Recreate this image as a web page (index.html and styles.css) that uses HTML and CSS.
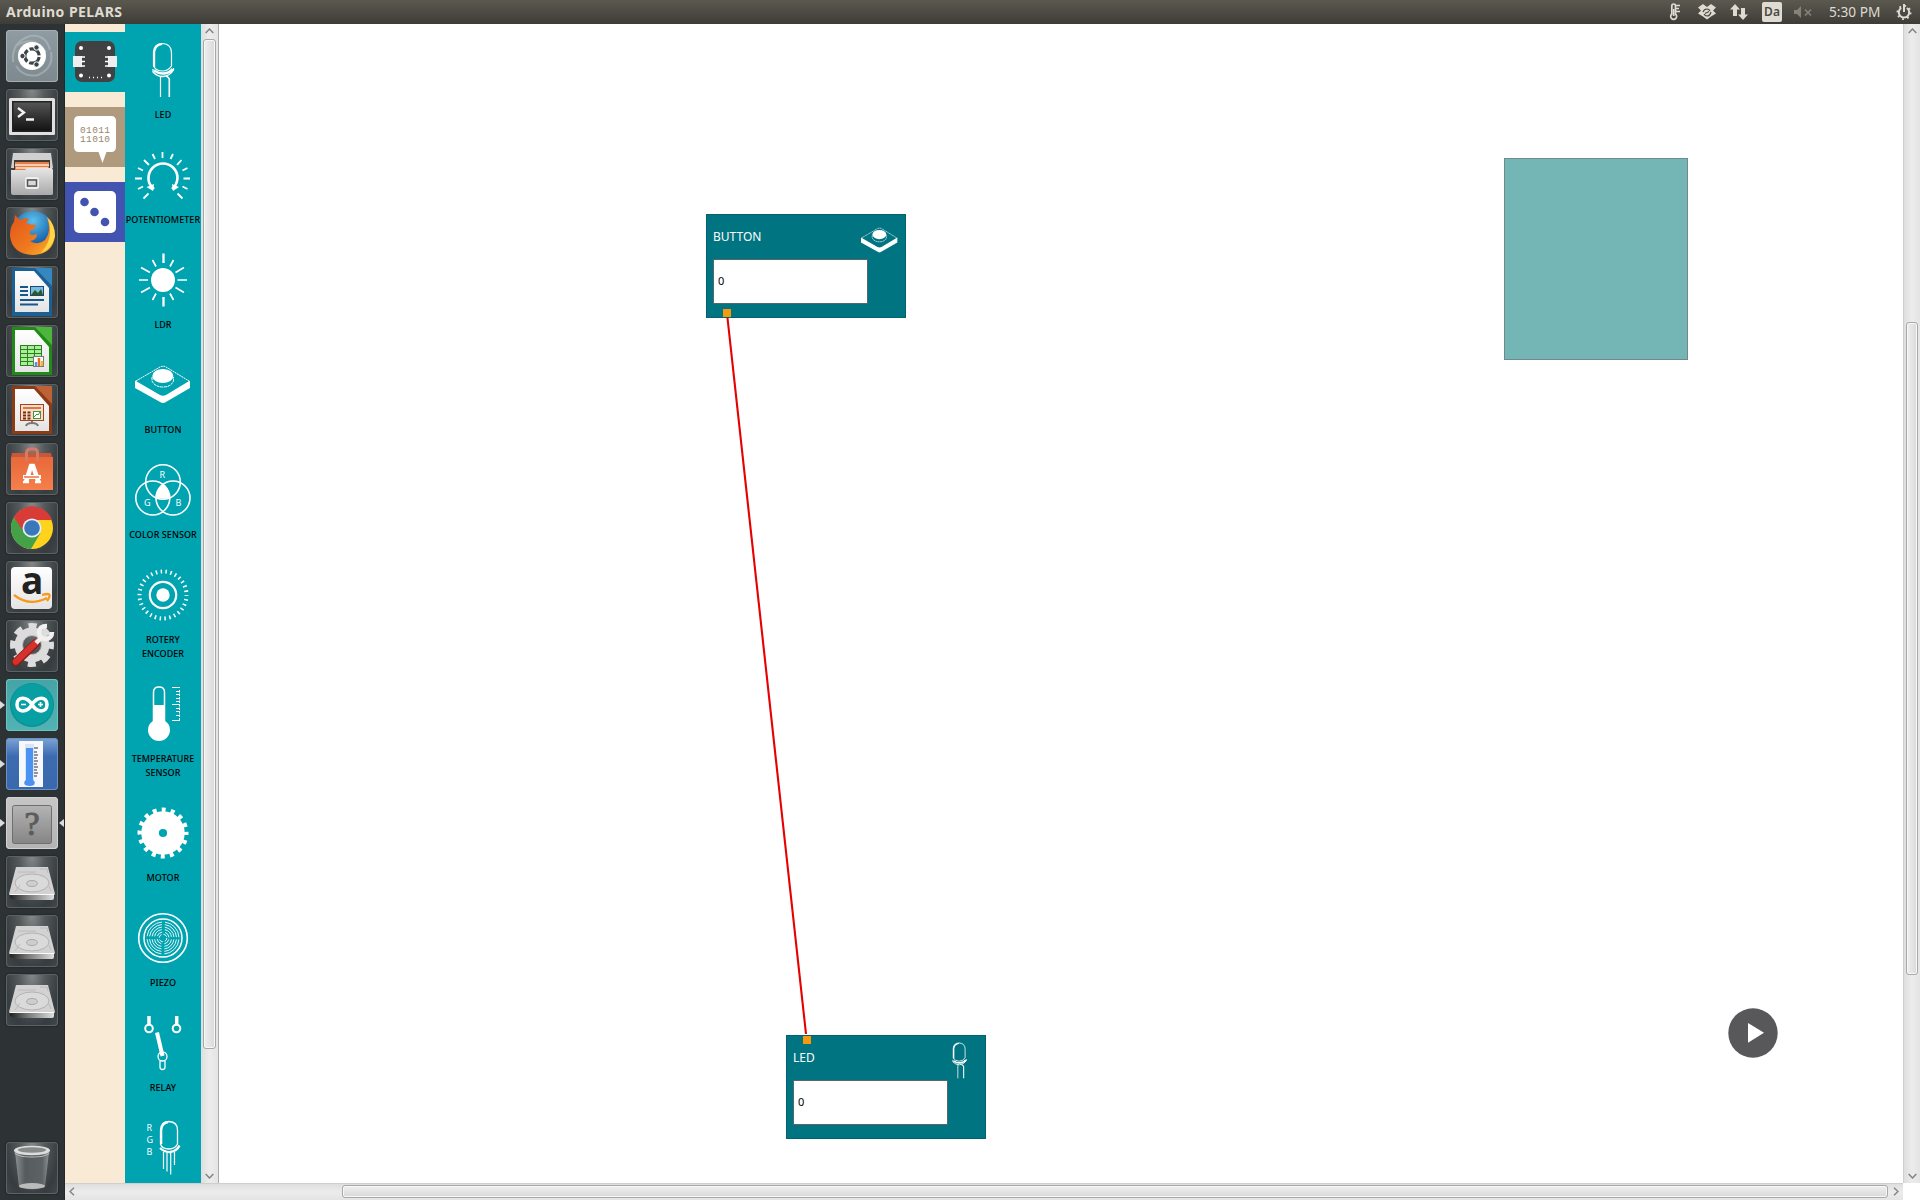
FILE: index.html
```html
<!DOCTYPE html>
<html lang="en">
<head>
<meta charset="utf-8">
<title>Arduino PELARS</title>
<link rel="stylesheet" href="styles.css">
</head>
<body>
<svg class="defs" width="0" height="0" aria-hidden="true">
  <defs>
    <linearGradient id="g-steel" x1="0" y1="0" x2="0" y2="1"><stop offset="0" stop-color="#e6e6e6"/><stop offset="1" stop-color="#a9a9a9"/></linearGradient>
    <linearGradient id="g-dark" x1="0" y1="0" x2="0" y2="1"><stop offset="0" stop-color="#555"/><stop offset=".5" stop-color="#333"/><stop offset="1" stop-color="#141414"/></linearGradient>
    <linearGradient id="g-orange" x1="0" y1="0" x2="0" y2="1"><stop offset="0" stop-color="#e8683a"/><stop offset="1" stop-color="#f4804c"/></linearGradient>
    <linearGradient id="g-fox" x1="0" y1="0" x2="1" y2="1"><stop offset="0" stop-color="#e0551a"/><stop offset=".6" stop-color="#f07a1e"/><stop offset="1" stop-color="#fbc02d"/></linearGradient>
    <radialGradient id="g-globe" cx=".5" cy=".25" r=".8"><stop offset="0" stop-color="#5fc0ea"/><stop offset=".6" stop-color="#1f6fb5"/><stop offset="1" stop-color="#123a78"/></radialGradient>
    <linearGradient id="g-paper" x1="0" y1="0" x2="0" y2="1"><stop offset="0" stop-color="#fff"/><stop offset="1" stop-color="#e4e4e4"/></linearGradient>
    <linearGradient id="g-edge" x1="0" y1="0" x2="1" y2="0"><stop offset="0" stop-color="#222"/><stop offset=".4" stop-color="#777"/><stop offset="1" stop-color="#ddd"/></linearGradient>
    <linearGradient id="g-glass" x1="0" y1="0" x2="1" y2="0"><stop offset="0" stop-color="#8b9092"/><stop offset=".3" stop-color="#565b5d"/><stop offset=".8" stop-color="#5d6264"/><stop offset="1" stop-color="#8d9294"/></linearGradient>
    <linearGradient id="g-unknown" x1="0" y1="0" x2="0" y2="1"><stop offset="0" stop-color="#b4b4b4"/><stop offset="1" stop-color="#858585"/></linearGradient>
  </defs>
  <symbol id="led" viewBox="0 0 56 56">
    <path fill="none" stroke="#fff" stroke-width="1.200" d="M18.500 24V10Q19 1.500 27.500 1.500Q36.500 2 36.500 11V24Q33 29 27.500 29Q21 29 18.500 24Z"/>
    <path fill="none" stroke="#fff" stroke-width="2" d="M19.200 25V10Q20 3 27 2"/>
    <path fill="none" stroke="#fff" stroke-width="1.300" d="M18 27V30Q22 34.500 28 34.500Q35 34 38.500 28V26"/>
    <path fill="none" stroke="#fff" stroke-width="2.500" d="M19 28.500Q24 32 29 31.500Q35 31 37.500 27"/>
    <path fill="none" stroke="#fff" stroke-width="1.200" d="M25.500 34V55"/>
    <path fill="none" stroke="#fff" stroke-width="1.600" d="M31 34Q33.500 35 34.300 37V55"/>
  </symbol>
  <symbol id="button" viewBox="0 0 56 56">
    <path fill="none" stroke="#fff" stroke-width="1" stroke-dasharray="2 .6" d="M1 24L25 10Q28 8.500 31 10L54 24"/>
    <path fill="#fff" d="M0 23.500L25 38Q28 39.500 31 38L55 23.500V31L30 45.500Q28 46.500 26 45.500L0 31Z"/>
    <path fill="none" stroke="#fff" stroke-dasharray="3 .6" d="M17 20V24Q20 30 28 30Q36 30 38.500 24V20"/>
    <ellipse cx="27.800" cy="19" rx="10.500" ry="7" fill="#fff"/>
  </symbol>
  <symbol id="drive" viewBox="0 0 52 52">
    <path fill="#d2d2d2" d="M10 11H42L49 38H3Z"/>
    <path fill="url(#g-edge)" d="M4 38H48V42Q48 44 46 44H9L4 42Z"/>
    <path stroke="#fafafa" stroke-width="1.200" d="M3.500 38.500H48.500"/>
    <ellipse cx="26" cy="27" rx="17" ry="9" fill="#dadada" stroke="#aaa" stroke-width=".8"/>
    <ellipse cx="26" cy="27.500" rx="5.500" ry="3" fill="#cecece" stroke="#9c9c9c" stroke-width=".8"/>
    <path fill="none" stroke="#b5b5b5" stroke-width=".8" d="M12 16H30M34 13H41L42 17M9 36L14 29M43 30L45 35"/>
  </symbol>
</svg>

<header class="topbar">
  <h1 class="topbar-title">Arduino PELARS</h1>
  <div class="tray">
    <svg class="tray-icon" width="12" height="18" viewBox="0 0 12 18"><path fill="none" stroke="#dfdbd2" stroke-width="1.700" d="M2.800 11V3Q2.800 1 4.700 1Q6.500 1 6.500 3V11A3 3 0 1 1 2.800 11Z"/><path stroke="#dfdbd2" stroke-width="1.700" d="M4.700 6V13M7 2.500H11M7 5.500H10M7 8.500H11"/></svg>
    <svg class="tray-icon" width="18" height="16" viewBox="0 0 18 16"><path fill="#dfdbd2" d="M5 0L9 3L13 0L18 3.500L15 6.500L18 9.500L13 12.500L9 15.500L5 12.500L0 9.500L3 6.500L0 3.500Z"/><path fill="none" stroke="#4a4840" stroke-width="1.200" d="M5 8Q6 5 9 5Q11 5 12 7M13 8Q12 12 9 12Q7 12 6 10M7 9.500L11 7.500"/></svg>
    <svg class="tray-icon" width="18" height="16" viewBox="0 0 18 16"><path fill="#dfdbd2" d="M5 0L10 5.500H7V12H3V5.500H0ZM13 16L8 10.500H11V4H15V10.500H18Z"/></svg>
    <span class="lang">Da</span>
    <svg class="tray-icon muted" width="18" height="12" viewBox="0 0 18 12"><path fill="#85827a" d="M0 4H3L7 0V12L3 8H0Z"/><path stroke="#85827a" stroke-width="1.700" d="M11 3.500L17 9.500M17 3.500L11 9.500"/></svg>
    <time class="clock">5:30 PM</time>
    <svg class="tray-icon" width="16" height="16" viewBox="0 0 16 16"><circle cx="8" cy="8.500" r="6.600" fill="none" stroke="#dfdbd2" stroke-width="1.800" stroke-dasharray="1.900 3.283"/><path fill="none" stroke="#dfdbd2" stroke-width="2" d="M5.200 4A5.200 5.200 0 1 0 10.800 4M8 0V8"/></svg>
  </div>
</header>

<main class="desktop">
  <nav class="launcher">
    <div class="tile tile-dash"><svg viewBox="0 0 52 52"><path fill="none" stroke="#b6bfc3" stroke-width="2" opacity=".55" d="M7 32Q5 12 24 6Q40 4 44 20M10 16Q28 4 40 22M45 22Q48 38 32 45Q18 48 10 36"/><circle cx="26" cy="26" r="14" fill="#fff"/><circle cx="26" cy="26" r="7.200" fill="none" stroke="#3b4549" stroke-width="3.200" stroke-dasharray="13.100 2" stroke-dashoffset="-1"/><g fill="#3b4549" stroke="#fff" stroke-width="1"><circle cx="16.500" cy="26" r="2.700"/><circle cx="30.500" cy="17.500" r="2.700"/><circle cx="30.500" cy="34.500" r="2.700"/></g></svg></div>
    <div class="tile"><svg viewBox="0 0 52 52"><rect x="3" y="9" width="46" height="37" rx="1.500" fill="#e0e0e0"/><rect x="6" y="12" width="40" height="31" fill="#222"/><rect x="7.500" y="13.500" width="37" height="28" fill="url(#g-dark)"/><path fill="none" stroke="#f4f4f4" stroke-width="2.300" d="M12 19L18 23.500L12 28M20 30.500H28"/></svg></div>
    <div class="tile"><svg viewBox="0 0 52 52"><path fill="#d0d0d0" d="M7 5H45L47 20H5Z"/><path fill="#403a35" d="M8 12H44V24H8Z"/><path fill="#e47c45" d="M9 14H43V22H9Z"/><path stroke="#ffe6cf" stroke-width="1.500" d="M9 17H43M10 20H42"/><path fill="url(#g-steel)" d="M5 22H19L21 20H46L47 22V46Q47 47 45 47H7Q5 47 5 45Z"/><rect x="20" y="30" width="12" height="10" rx="1.500" fill="none" stroke="#efefef" stroke-width="2"/><rect x="21.500" y="32" width="9" height="6" fill="#d9d9d9" stroke="#555" stroke-width="1.500"/></svg></div>
    <div class="tile"><svg viewBox="0 0 52 52"><circle cx="27" cy="24" r="20" fill="url(#g-globe)"/><path fill="url(#g-fox)" d="M9 8L14 13Q19 10 23 12L20 16Q24 18 30 18L28 22L24 24Q22 27 27 28L31 27Q31 33 24 34Q32 39 39 33Q46 24 41 11Q49 17 49 29Q47 47 27 48Q6 47 4 29Q4 19 8 15Z"/><path fill="#ffd54a" d="M41 10Q49 17 49 29Q46 42 35 46Q44 36 44 25Q44 16 41 10Z"/></svg></div>
    <div class="tile"><svg viewBox="0 0 52 52"><path fill="#1c5f92" d="M6 2H46V50H6Z"/><path fill="#3587bf" d="M29 2H46V20Z"/><path fill="url(#g-paper)" d="M9 5H28L43 22V46H9Z"/><path stroke="#16578c" stroke-width="2" d="M14 21H22M14 25H22M14 29H22M14 34H38M14 38.500H32"/><rect x="24.500" y="20.500" width="13" height="9" fill="#76bce3" stroke="#174a74"/><path fill="#31591f" d="M25 29L29 24L32 27L35 23L37 29Z"/></svg></div>
    <div class="tile"><svg viewBox="0 0 52 52"><path fill="#218a16" d="M6 2H46V50H6Z"/><path fill="#4bb53c" d="M29 2H46V20Z"/><path fill="url(#g-paper)" d="M9 5H28L43 22V47H9Z"/><rect x="14" y="20" width="22" height="21" fill="#2e7d1f"/><path fill="none" stroke="#a6f09a" stroke-width="2.800" d="M15 22.500H35M15 26.500H35M15 30.500H35M15 34.500H35M15 38.500H35" stroke-dasharray="6 1 6 1 6 0"/><rect x="27.500" y="31.500" width="10" height="10" fill="#fff" stroke="#777"/><path stroke-width="2.500" stroke="#469bd2" d="M30 41V37"/><path stroke-width="2.500" stroke="#e4672b" d="M33 41V33"/><path stroke-width="2.500" stroke="#efb92d" d="M36 41V36"/></svg></div>
    <div class="tile"><svg viewBox="0 0 52 52"><path fill="#8b3b15" d="M6 2H46V50H6Z"/><path fill="#bd6137" d="M29 2H46V20Z"/><path fill="url(#g-paper)" d="M9 5H28L43 22V47H9Z"/><rect x="14.500" y="20.500" width="23" height="16" fill="#ffd9c1" stroke="#9c451e"/><path stroke="#cf7a50" stroke-width="2" d="M17 24H35"/><path stroke="#6f2d10" stroke-width="2" stroke-dasharray="3 1.500" d="M17 28.500H26M17 31.500H26M17 34.500H26"/><rect x="27.500" y="27.500" width="7" height="7" fill="#fff" stroke="#3c9a3c"/><path fill="none" stroke="#3c9a3c" d="M28 33L31 30L32 31L34 28"/><path fill="none" stroke="#777" stroke-width="2" d="M26 37V39M20 42Q21 39 26 39Q31 39 32 42"/></svg></div>
    <div class="tile"><svg viewBox="0 0 52 52"><path fill="#c8573a" d="M6 10H45L46 15H5Z"/><path fill="url(#g-orange)" d="M5 14H47V47H5Z"/><path fill="none" stroke="#d67a62" stroke-width="3" d="M20.500 18V10Q20.500 6 25 6H28Q31.500 6 31.500 10V18"/><path fill="none" stroke="#fff" stroke-width="4.500" d="M20 39L25 23H27L32.500 39"/><path stroke="#fff" stroke-width="4" d="M17 34H35"/><path stroke="#fff" stroke-width="2.500" d="M17 39H23M29 39H35"/><path stroke="#ed7141" stroke-width="1.500" d="M18 34H33"/></svg></div>
    <div class="tile"><svg viewBox="0 0 52 52"><circle cx="26" cy="26" r="21" fill="#ffd21c"/><path fill="#d93b36" d="M7.800 15.500A21 21 0 0 1 46 18H26L17 31Z"/><path fill="#44a148" d="M7.800 15.500A21 21 0 0 0 25 47L34.500 31L18 30Z"/><circle cx="26" cy="26" r="9.500" fill="#e6eef6"/><circle cx="26" cy="26" r="7.800" fill="#3b78b9"/></svg></div>
    <div class="tile"><svg viewBox="0 0 52 52"><rect x="5" y="6" width="41" height="42" rx="4" fill="url(#g-paper)"/><text class="amazon-a" x="15" y="33">a</text><path fill="none" stroke="#f79a1c" stroke-width="2.300" d="M8 34Q23 46 41 37M36 34Q43 32 43.500 34Q44 36 41 40"/></svg></div>
    <div class="tile"><svg viewBox="0 0 52 52"><circle cx="26" cy="25" r="19" fill="none" stroke="#ddd" stroke-width="6" stroke-dasharray="8 6.923" stroke-dashoffset="4"/><circle cx="26" cy="25" r="13.500" fill="none" stroke="#dcdcdc" stroke-width="8"/><circle cx="26" cy="25" r="9.500" fill="none" stroke="#bdbdbd"/><path stroke="#8e1b17" stroke-width="8.500" stroke-linecap="round" d="M10 42L30 23"/><path stroke="#d3332c" stroke-width="6.500" stroke-linecap="round" d="M10 41.500L30 22.500"/><path fill="none" stroke="#f0f0f0" stroke-width="4.500" d="M30 23L36 17M41 6Q33 6 33 13Q34 19 40 19Q46 18 46 12"/></svg></div>
    <div class="tile tile-arduino running"><svg viewBox="0 0 52 52"><circle cx="26" cy="26" r="22" fill="#0b8e92"/><circle cx="26" cy="25.500" r="21" fill="#089fa3"/><path fill="none" stroke="#fff" stroke-width="3.500" d="M26 25.500C21 17 11 17 11 25.500S21 34 26 25.500S41 17 41 25.500S31 34 26 25.500Z"/><path stroke="#fff" stroke-width="1.600" d="M15 25.500H20M32 25.500H37M34.500 23V28"/></svg></div>
    <div class="tile tile-thermo running"><svg viewBox="0 0 52 52"><rect x="13" y="3" width="24" height="46" fill="#f7f8fb"/><rect x="19" y="6" width="9" height="38" fill="#d9e4f5"/><path fill="#4a93f2" d="M20 10H27V42Q30 44 28 47Q24 49 19 47Q17 44 20 42Z"/><path stroke="#333" d="M28 10H32M28 14H31M28 17H32M28 20H31M28 23H32M28 26H31M28 29H32M28 32H31M28 35H32M28 38H31"/></svg></div>
    <div class="tile tile-unknown running active"><svg viewBox="0 0 52 52"><rect x="6.500" y="8.500" width="39" height="38" rx="2" fill="url(#g-unknown)" stroke="#6f6f6f"/><text class="unknown-mark" x="26" y="38">?</text></svg></div>
    <div class="tile"><svg><use href="#drive"/></svg></div>
    <div class="tile"><svg><use href="#drive"/></svg></div>
    <div class="tile"><svg><use href="#drive"/></svg></div>
    <div class="tile tile-trash"><svg viewBox="0 0 52 52"><path fill="url(#g-glass)" d="M9 10H43L39 45Q26 50 13 45Z"/><ellipse cx="26" cy="44" rx="13" ry="3" fill="#b9bcbb"/><ellipse cx="26" cy="8.500" rx="18" ry="4.800" fill="#dcdddd"/><path fill="#c2c4c4" d="M8 8.500Q9 14.500 26 14.500Q43 14.500 44 8.500L43 12Q38 15.500 26 15.500Q14 15.500 9 12Z"/><ellipse cx="26" cy="8" rx="14" ry="2.700" fill="#878b8c"/></svg></div>
  </nav>

  <div class="app">
    <div class="panes">
      <div class="tabs">
        <div class="tab tab-hardware"><svg width="60" height="60" viewBox="0 0 60 60"><rect x="10" y="9" width="40" height="41" rx="7" fill="#414042"/><path fill="#eee" d="M8 24H17V35H8ZM43 24H52V35H43Z"/><path stroke="#fff" stroke-width="1.500" d="M16 25H20M16 29.500H20M16 34H20M40 25H44M40 29.500H44M40 34H44"/><g fill="#fff"><circle cx="16" cy="16" r="2"/><circle cx="44" cy="16" r="2"/><circle cx="16" cy="43.500" r="2"/><circle cx="44" cy="43.500" r="2"/></g><path stroke="#fff" stroke-dasharray="1 3" stroke-width="1.500" d="M24 45.500H38"/></svg></div>
        <div class="tab tab-logic"><svg width="60" height="60" viewBox="0 0 60 60"><path fill="#fff" d="M14 9H46Q51 9 51 14V40Q51 45 46 45H41.500L37.500 56L33.500 45H14Q9 45 9 40V14Q9 9 14 9Z"/><text class="bits" x="15" y="26" textLength="30">01011</text><text class="bits" x="15" y="35" textLength="30">11010</text></svg></div>
        <div class="tab tab-random"><svg width="60" height="60" viewBox="0 0 60 60"><rect x="9" y="9" width="42" height="42" rx="5" fill="#fff"/><g fill="#4253b0"><circle cx="19.500" cy="20" r="4.300"/><circle cx="29.500" cy="30" r="4.300"/><circle cx="40" cy="40" r="4.300"/></g></svg></div>
      </div>

      <div class="palette">
        <div class="part"><svg class="part-icon"><use href="#led"/></svg><span class="part-name">LED</span></div>
        <div class="part"><svg class="part-icon" viewBox="0 -3 56 56"><path fill="none" stroke="#fff" stroke-width="2.600" d="M19 39Q13 34 13.500 28A14.500 14.500 0 0 1 42.500 28Q42 35 37 39"/><path fill="#fff" d="M11.500 37L19 34L18 41ZM44 37L37 34L38 41Z"/><path stroke="#fff" stroke-width="1.800" d="M27.500 2V8M17.500 4L20 9M38 4L35.500 9M9 10L14 15M46.500 10L42 15M3 18L8 20.500M52.500 18L47.500 20.500M0 28.500H7M48.500 28.500H55M3 39L8 36.500M52.500 39L47.500 36.500M8.500 48.500L13.500 43.500M47.500 48.500L42.500 43.500"/></svg><span class="part-name">POTENTIOMETER</span></div>
        <div class="part"><svg class="part-icon" viewBox="0 0 56 56"><circle cx="28" cy="28" r="12" fill="#fff"/><path stroke="#fff" stroke-width="1.700" d="M42.500 28H52M13 28H4M40.500 20.500L49 15.500M15 20.500L6 15.500M40.500 35.500L49 40.500M15 35.500L6 40.500M35 14.500L38.500 8M21 14.500L17.500 8M35 41.500L38.500 48M21 41.500L17.500 48"/><path stroke="#fff" stroke-width="2.300" d="M28.500 11V1.500M28.500 45V54.500"/></svg><span class="part-name">LDR</span></div>
        <div class="part"><svg class="part-icon"><use href="#button"/></svg><span class="part-name">BUTTON</span></div>
        <div class="part"><svg class="part-icon" viewBox="0 0 56 56"><g fill="none" stroke="#fff" stroke-width="1.600"><circle cx="28" cy="20" r="17.300"/><circle cx="17.800" cy="36" r="17"/><circle cx="38" cy="36" r="17"/></g><path fill="#fff" d="M28 21.500Q34 26 35 35.500Q28 38 21 35.500Q22 26 28 21.500Z"/><g class="rgb-letter"><text x="24.500" y="16">R</text><text x="9" y="43.500">G</text><text x="40.500" y="43.500">B</text></g></svg><span class="part-name">COLOR SENSOR</span></div>
        <div class="part"><svg class="part-icon" viewBox="0 0 56 56"><circle cx="28" cy="28" r="23.500" fill="none" stroke="#fff" stroke-width="4" stroke-dasharray="1.500 3.422" stroke-dashoffset=".7"/><circle cx="28" cy="28" r="13.200" fill="none" stroke="#fff" stroke-width="2.200"/><circle cx="28" cy="28" r="6.700" fill="#fff"/></svg><span class="part-name">ROTERY<br>ENCODER</span></div>
        <div class="part"><svg class="part-icon" viewBox="0 0 56 56"><path fill="none" stroke="#fff" stroke-width="1.500" d="M18.500 36V6Q18.500 1 24 1Q29.500 1 29.500 6V36"/><path fill="#fff" d="M18 19H30V35Q35 38 35 44A11 11 0 1 1 13 44Q13 38 18 35Z"/><path fill="none" stroke="#fff" d="M37 1.500H45M41 5.500H44M41 8.500H44M41 12.500H44M37 18.500H44M41 15.500H44M41 22.500H44M41 25.500H44M41 29.500H44M37 34.500H45"/><path stroke="#fff" stroke-dasharray="2.500 1" d="M44.500 4V34"/></svg><span class="part-name">TEMPERATURE<br>SENSOR</span></div>
        <div class="part"><svg class="part-icon" viewBox="0 0 56 56"><circle cx="28" cy="28" r="12.900" fill="none" stroke="#fff" stroke-width="17.600"/><circle cx="28" cy="28" r="23" fill="none" stroke="#fff" stroke-width="5" stroke-dasharray="4 5.032" stroke-dashoffset="2"/></svg><span class="part-name">MOTOR</span></div>
        <div class="part"><svg class="part-icon" viewBox="0 0 56 56"><g fill="none" stroke="#fff"><circle cx="28" cy="28" r="24.300" stroke-width="1.600"/><circle cx="28" cy="28" r="19" stroke-width="1.500"/><g stroke-width=".9"><circle cx="28" cy="28" r="16" stroke-dasharray="22.130 3" stroke-dashoffset="-1.500"/><circle cx="28" cy="28" r="13.500" stroke-dasharray="18.200 3" stroke-dashoffset="-1.500"/><circle cx="28" cy="28" r="11" stroke-dasharray="14.280 3" stroke-dashoffset="-1.500"/><circle cx="28" cy="28" r="8.500" stroke-dasharray="10.350 3" stroke-dashoffset="-1.500"/><circle cx="28" cy="28" r="6" stroke-dasharray="6.420 3" stroke-dashoffset="-1.500"/><circle cx="28" cy="28" r="3.800" stroke-dasharray="4 1.970"/></g></g></svg><span class="part-name">PIEZO</span></div>
        <div class="part"><svg class="part-icon" viewBox="0 0 56 56"><g fill="none" stroke="#fff"><circle cx="14" cy="13.500" r="3.800" stroke-width="2"/><circle cx="41.500" cy="13.500" r="3.800" stroke-width="2"/><path stroke-width="3.500" d="M14 10V1M41.700 10V1"/><path stroke-width="4" d="M22 17.500L27.500 41"/><circle cx="27.500" cy="41.500" r="4.500" stroke-width="1.300"/><path stroke-width="1.300" d="M25 46V52Q25 54.500 27.500 54.500Q30 54.500 30 52V46"/></g></svg><span class="part-name">RELAY</span></div>
        <div class="part"><svg class="part-icon" viewBox="0 0 56 56"><g class="rgb-letter"><text x="11.500" y="11">R</text><text x="11.500" y="23">G</text><text x="11.500" y="34.500">B</text></g><g fill="none" stroke="#fff"><path stroke-width="1.300" d="M25.500 24V10Q26 1.500 34 1.500Q42.500 2 42.500 10V24Q40 29 34 29Q27 29 25.500 24Z"/><path stroke-width="2" d="M26.300 24V10Q27 3 33 2.300"/><path stroke-width="2.300" d="M25 28Q30 32.500 35 32Q42 31 44.500 25.500"/><path stroke-width="1.200" d="M28.500 32V49M32 33V51.500M35.700 33V54.500M39.500 32V45"/></g></svg></div>
      </div>

      <div class="scrollbar vertical palette-scroll">
        <svg class="arrow" width="9" height="6" viewBox="0 0 9 6"><path d="M.7 5L4.500 1L8.300 5"/></svg>
        <div class="track"><div class="thumb"></div></div>
        <svg class="arrow" width="9" height="6" viewBox="0 0 9 6"><path d="M.7 1L4.500 5L8.300 1"/></svg>
      </div>

      <div class="canvas">
        <div class="drop-zone"></div>
        <section class="node node-button">
          <h2 class="node-name">BUTTON</h2>
          <svg class="node-icon"><use href="#button"/></svg>
          <div class="node-value">0</div>
          <i class="port"></i>
        </section>
        <section class="node node-led">
          <h2 class="node-name">LED</h2>
          <svg class="node-icon"><use href="#led"/></svg>
          <div class="node-value">0</div>
          <i class="port"></i>
        </section>
        <svg class="wire" width="84" height="722" viewBox="0 0 84 722"><path stroke="#e60000" stroke-width="2.100" d="M2.500 3L81 719"/></svg>
        <svg class="play" width="50" height="50" viewBox="0 0 50 50"><circle cx="25" cy="25" r="24.700" fill="#58585a"/><path fill="#fff" d="M20 15L36 24.800L20 34.700Z"/></svg>
      </div>

      <div class="scrollbar vertical canvas-scroll">
        <svg class="arrow" width="9" height="6" viewBox="0 0 9 6"><path d="M.7 5L4.500 1L8.300 5"/></svg>
        <div class="track"><div class="thumb"></div></div>
        <svg class="arrow" width="9" height="6" viewBox="0 0 9 6"><path d="M.7 1L4.500 5L8.300 1"/></svg>
      </div>
    </div>
    <div class="scrollbar horizontal">
      <svg class="arrow" width="6" height="9" viewBox="0 0 6 9"><path d="M5 .7L1 4.500L5 8.300"/></svg>
      <div class="track"><div class="thumb"></div></div>
      <svg class="arrow" width="6" height="9" viewBox="0 0 6 9"><path d="M1 .7L5 4.500L1 8.300"/></svg>
    </div>
  </div>
</main>
</body>
</html>
```
FILE: styles.css
```css
* { box-sizing: border-box; }
html, body { height: 100%; }
body {
  margin: 0;
  display: flex;
  flex-direction: column;
  overflow: hidden;
  background: #fff;
  font-family: "Noto Sans", "Open Sans", sans-serif;
}
svg { display: block; }
.defs { position: absolute; }

/* top bar */
.topbar {
  flex: none;
  height: 24px;
  display: flex;
  align-items: center;
  justify-content: space-between;
  padding: 0 8px 0 6px;
  background: linear-gradient(#5b594f, #3d3c37);
  color: #dfdbd2;
}
.topbar-title {
  margin: 0;
  font: 700 14px/24px "Noto Sans", sans-serif;
  letter-spacing: .45px;
}
.tray { display: flex; align-items: center; }
.tray-icon { flex: none; margin-right: 14px; }
.tray-icon:first-child { margin-right: 17px; }
.tray-icon:last-child { margin-right: 0; }
.tray .lang { margin-right: 12px; }
.lang {
  width: 20px;
  height: 20px;
  border-radius: 2px;
  background: #dfdbd2;
  color: #4a4840;
  font-size: 12px;
  font-weight: 600;
  line-height: 20px;
  text-align: center;
}
.tray-icon.muted { margin-right: 17px; }
.clock { width: 53px; margin-right: 14px; font-size: 13.700px; line-height: 24px; white-space: nowrap; }

/* launcher */
.desktop { flex: 1; min-height: 0; display: flex; }
.launcher {
  flex: none;
  width: 65px;
  display: flex;
  flex-direction: column;
  gap: 7px;
  padding: 6px 7px 6px 6px;
  background: #2d3335;
  border-right: 1px solid #22282a;
}
.tile {
  position: relative;
  flex: none;
  width: 52px;
  height: 52px;
  border-radius: 4px;
  background: radial-gradient(ellipse at 50% 0, #85898a 0, #54595b 35%, #363c3f 75%, #43494b 100%);
  box-shadow: inset 0 0 0 1px #5c6163, 0 0 2px #151819;
}
.tile svg { width: 52px; height: 52px; overflow: visible; }
.tile-dash { background: linear-gradient(#8f9ca2, #7d898e); box-shadow: inset 0 0 0 1px #a4b0b4; }
.tile-arduino { background: linear-gradient(#45a5a6, #52b3b4); box-shadow: inset 0 0 0 1px #70c2c2; }
.tile-thermo { background: linear-gradient(#7da4d5, #3c6bb0 35%, #3a68ad); box-shadow: inset 0 0 0 1px #6b92c8; }
.tile-unknown { background: linear-gradient(#c6c6c6, #b3b3b3); box-shadow: inset 0 0 0 1px #d2d2d2; }
.tile-trash { margin-top: auto; }
.unknown-mark { font: 34px "Liberation Serif", serif; fill: #5c5c5c; stroke: #5c5c5c; text-anchor: middle; }
.amazon-a { font: 700 37px "Open Sans", sans-serif; fill: #222; }
.running::before {
  content: "";
  position: absolute;
  left: -6px;
  top: 22px;
  border: 4px solid transparent;
  border-left: 5px solid #dcdcdc;
  border-right: 0;
}
.active::after {
  content: "";
  position: absolute;
  right: -6px;
  top: 22px;
  border: 4px solid transparent;
  border-right: 5px solid #dcdcdc;
  border-left: 0;
}

/* application */
.app { flex: 1; min-width: 0; display: flex; flex-direction: column; }
.panes { flex: 1; min-height: 0; display: flex; }
.tabs {
  flex: none;
  width: 60px;
  display: flex;
  flex-direction: column;
  gap: 15px;
  padding-top: 8px;
  background: #f9ead6;
}
.tab { height: 60px; }
.tab-hardware { background: #00a3af; }
.tab-logic { background: #af9a7e; }
.tab-random { background: #4253b0; }
.bits { font: 9.500px "Liberation Mono", monospace; fill: #98866c; }

.palette {
  flex: none;
  width: 76px;
  display: flex;
  flex-direction: column;
  gap: 21px;
  padding-top: 18px;
  overflow: hidden;
  background: #00a3b0;
}
.part { flex: none; display: flex; flex-direction: column; align-items: center; gap: 10px; padding-bottom: 4px; }
.part-icon { width: 56px; height: 56px; }
.part-name {
  font-size: 9px;
  font-weight: 500;
  line-height: 14px;
  letter-spacing: .05px;
  text-align: center;
  white-space: nowrap;
  color: #000;
}
.rgb-letter { font: 9px "Noto Sans", sans-serif; fill: #fff; }

/* scrollbars */
.scrollbar { flex: none; display: flex; align-items: center; }
.arrow { flex: none; fill: none; stroke: #858585; stroke-width: 1.500; }
.track { flex: 1; min-width: 0; min-height: 0; display: flex; }
.thumb { border: 1px solid #a8a8a8; border-radius: 3px; box-shadow: inset 0 0 0 1px #f8f8f8; }
.vertical {
  width: 17px;
  flex-direction: column;
  padding: 4px 0;
  background: linear-gradient(90deg, #dedede, #ececec 50%, #e4e4e4);
}
.vertical .track { flex-direction: column; width: 12px; }
.vertical .thumb { background: linear-gradient(90deg, #efefef, #d9d9d9); }
.palette-scroll { width: 18px; border-right: 1px solid #aaa; }
.palette-scroll .track { width: 13px; padding-top: 5px; }
.palette-scroll .thumb { height: 1010px; }
.canvas-scroll .track { padding-top: 288px; }
.canvas-scroll .thumb { height: 653px; }
.canvas-scroll { border-left: 1px solid #cfcfcf; }
.horizontal {
  height: 17px;
  margin-right: 17px;
  padding: 0 4px 1px;
  border-top: 1px solid #cfcfcf;
  background: linear-gradient(#dedede, #ececec 50%, #e4e4e4);
}
.horizontal .track { height: 13px; padding-left: 267px; padding-right: 5px; }
.horizontal .thumb { flex: 1; background: linear-gradient(#efefef, #d9d9d9); }

/* canvas: freely placed blocks */
.canvas { position: relative; flex: 1; min-width: 0; background: #fff; }
.drop-zone {
  position: absolute;
  left: 1285px;
  top: 134px;
  width: 184px;
  height: 202px;
  border: 1px solid #70898a;
  background: #73b6b5;
}
.node {
  position: absolute;
  width: 200px;
  height: 104px;
  display: grid;
  grid-template-columns: 148px 37px;
  grid-template-rows: 37px 45px;
  padding: 7px 0 0 6px;
  border: 1px solid #00626e;
  background: #007481;
}
.node-button { left: 487px; top: 190px; }
.node-led { left: 567px; top: 1011px; }
.node-name { margin: 0; font-size: 12px; font-weight: 400; line-height: 30px; color: #fff; }
.node-icon { width: 37px; height: 37px; }
.node-led .node-icon { margin-top: -1px; }
.node-value {
  width: 155px;
  height: 45px;
  padding-left: 4px;
  border: 1px solid #56666b;
  background: #fff;
  font-size: 11px;
  line-height: 42px;
  color: #000;
}
.port { position: absolute; width: 8px; height: 8px; left: 16px; background: #f59a0c; }
.node-button .port { bottom: 0; }
.node-led .port { top: 0; }
.wire { position: absolute; left: 506px; top: 291px; }
.play { position: absolute; left: 1509px; top: 984px; }
```
